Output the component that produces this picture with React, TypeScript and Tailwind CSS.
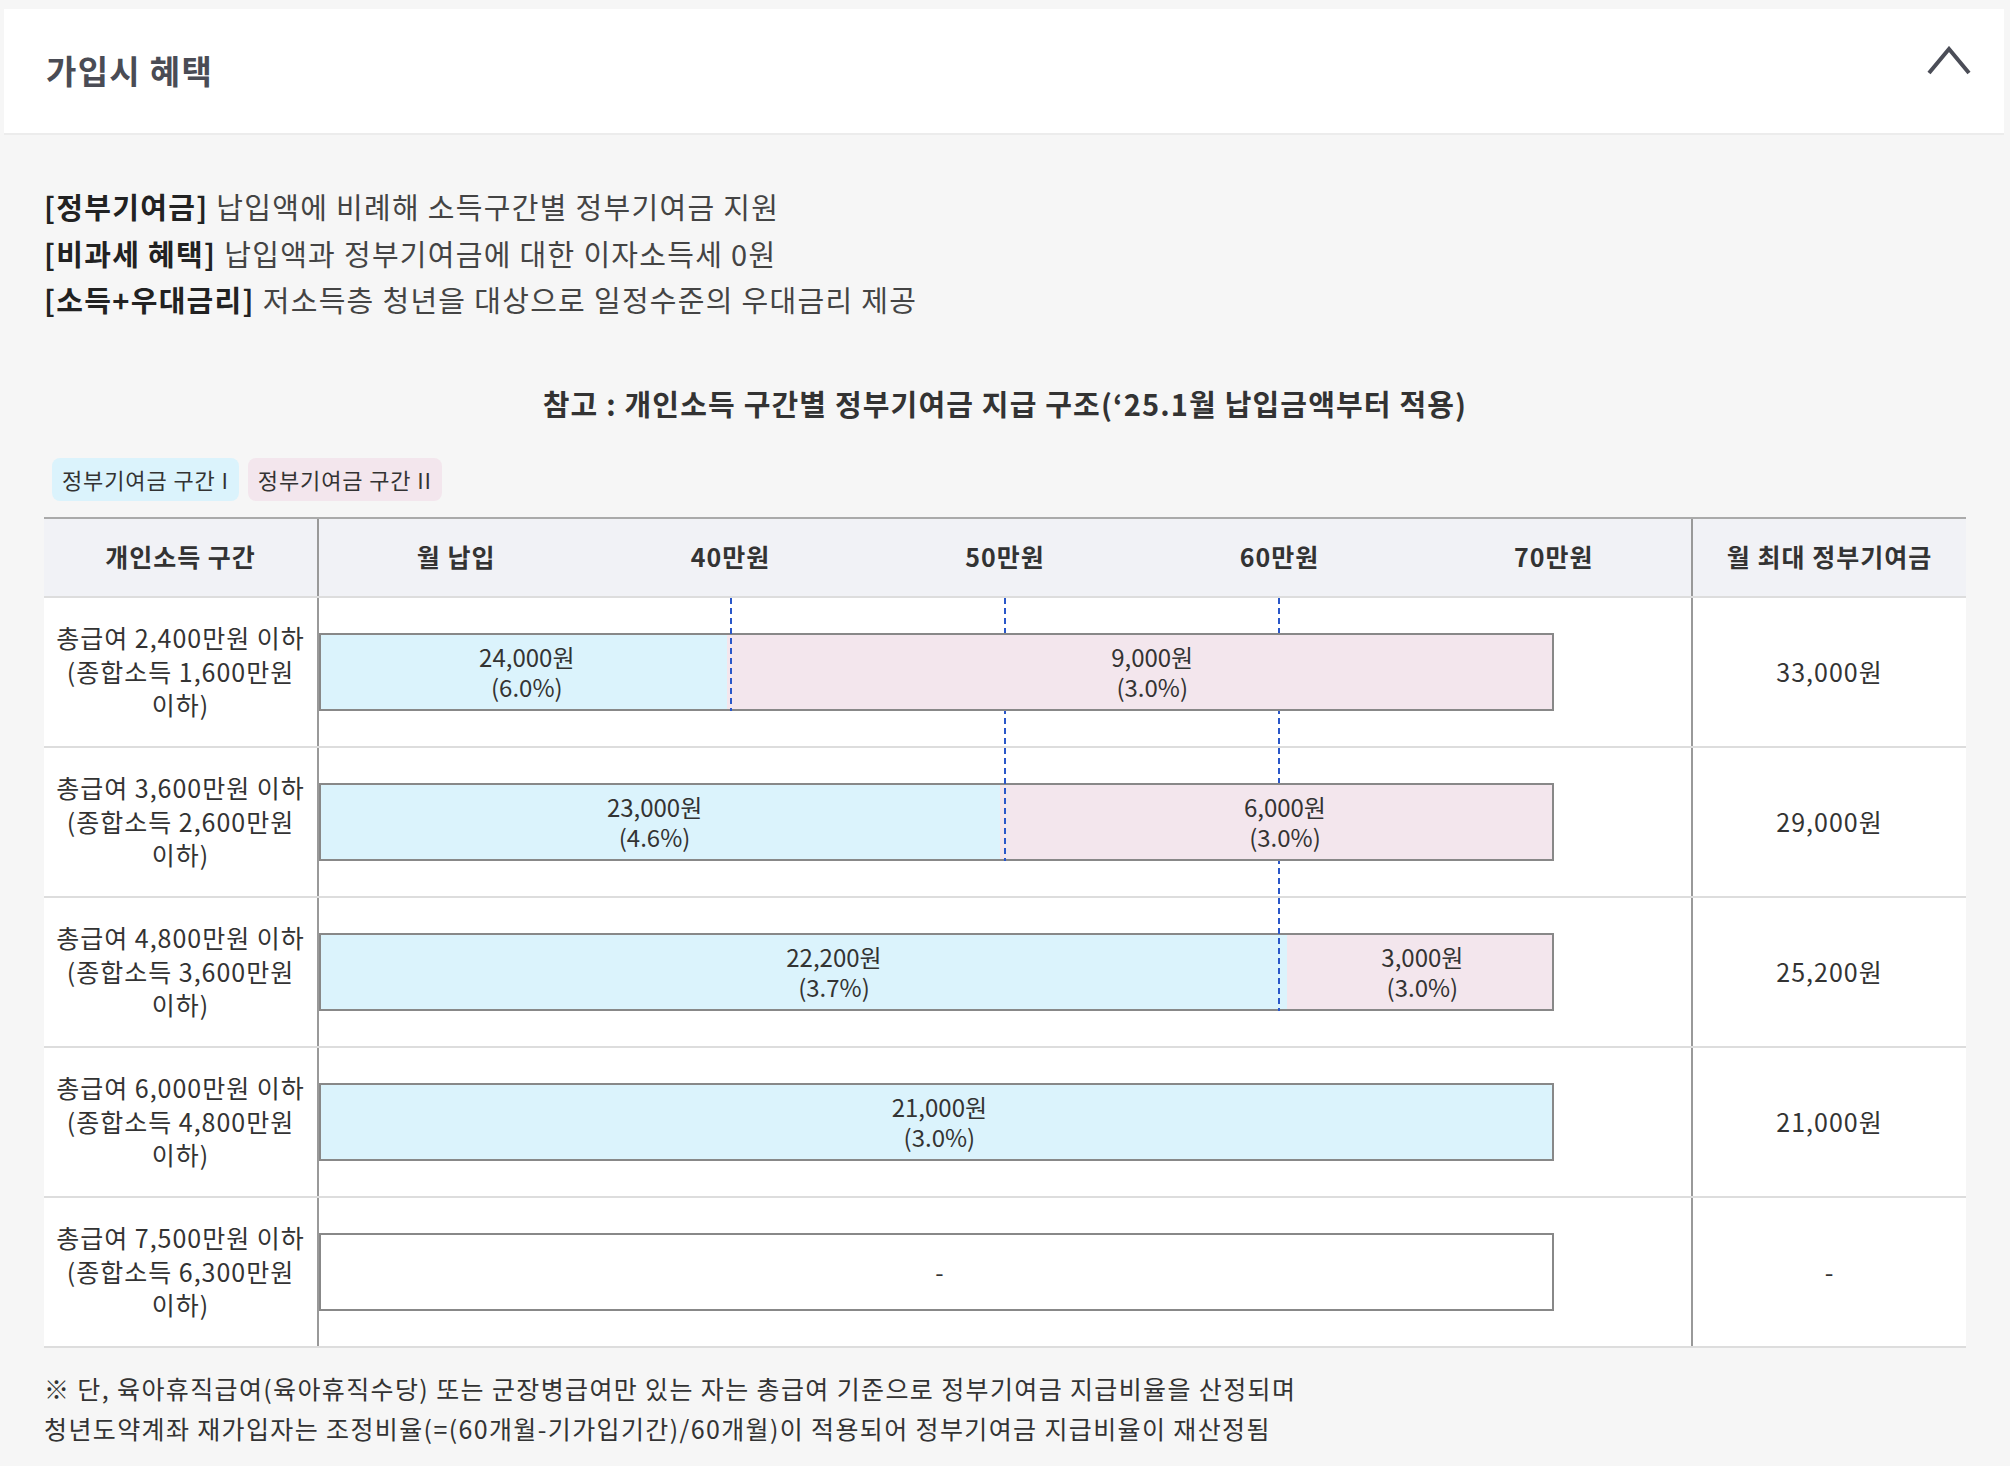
type Seg = { grow: number; tone: "blue" | "pink" | "none"; lines: string[]; cls?: string };
type Dash = { pos: number; short?: boolean };
type Row = { label: string[]; segs: Seg[]; dashes: Dash[]; max: string };

const rows: Row[] = [
  {
    label: ["총급여 2,400만원 이하", "(종합소득 1,600만원", "이하)"],
    segs: [
      { grow: 30, tone: "blue", lines: ["24,000원", "(6.0%)"], cls: "pl-[6px]" },
      { grow: 60, tone: "pink", lines: ["9,000원", "(3.0%)"], cls: "pl-[26px]" },
    ],
    dashes: [{ pos: 30, short: true }, { pos: 50 }, { pos: 70 }],
    max: "33,000원",
  },
  {
    label: ["총급여 3,600만원 이하", "(종합소득 2,600만원", "이하)"],
    segs: [
      { grow: 50, tone: "blue", lines: ["23,000원", "(4.6%)"], cls: "pr-[12px]" },
      { grow: 40, tone: "pink", lines: ["6,000원", "(3.0%)"], cls: "pl-[18px]" },
    ],
    dashes: [{ pos: 50, short: true }, { pos: 70 }],
    max: "29,000원",
  },
  {
    label: ["총급여 4,800만원 이하", "(종합소득 3,600만원", "이하)"],
    segs: [
      { grow: 70, tone: "blue", lines: ["22,200원", "(3.7%)"], cls: "pl-[60px]" },
      { grow: 20, tone: "pink", lines: ["3,000원", "(3.0%)"], cls: "pl-[6px]" },
    ],
    dashes: [{ pos: 70, short: true }],
    max: "25,200원",
  },
  {
    label: ["총급여 6,000만원 이하", "(종합소득 4,800만원", "이하)"],
    segs: [{ grow: 90, tone: "blue", lines: ["21,000원", "(3.0%)"], cls: "pl-[6px]" }],
    dashes: [],
    max: "21,000원",
  },
  {
    label: ["총급여 7,500만원 이하", "(종합소득 6,300만원", "이하)"],
    segs: [{ grow: 90, tone: "none", lines: ["-"], cls: "pl-[6px]" }],
    dashes: [],
    max: "-",
  },
];

const toneClass = {
  blue: "bg-[#dbf3fc]",
  pink: "bg-[#f3e6ed]",
  none: "bg-white",
};

function DashLine({ d }: { d: Dash }) {
  return (
    <div
      className={
        "absolute top-0 w-[2px] -ml-[1px] bg-[repeating-linear-gradient(to_bottom,#2a57c9_0_6px,transparent_6px_10px)] " +
        (d.short ? "h-[113px] z-20" : "h-full z-0")
      }
      style={{ left: `${d.pos}%` }}
    />
  );
}

function Chevron() {
  return (
    <svg width="46" height="30" viewBox="0 0 46 30" fill="none" className="-mt-[20px]">
      <polyline points="3,27 23,3 43,27" stroke="#4b4d57" strokeWidth="4" strokeLinejoin="miter" />
    </svg>
  );
}

export default function App() {
  return (
    <div className="w-[2010px] h-[1466px] bg-[#f6f6f6] pt-[9px] font-['Noto_Sans_CJK_KR',sans-serif] text-[#333]">
      <header className="mx-[4px] w-[2000px] h-[126px] bg-white border-b-2 border-[#ececec] flex items-center justify-between pl-[42px] pr-[32px]">
        <h2 className="text-[33px] tracking-[0.04em] font-semibold text-[#4a4c55]">가입시 혜택</h2>
        <Chevron />
      </header>

      <section className="px-[44px]">
        <div className="mt-[48px] text-[29px] tracking-[0.045em] leading-[46.5px] text-[#444]">
          <p><b className="font-bold text-[#222]">[정부기여금]</b> 납입액에 비례해 소득구간별 정부기여금 지원</p>
          <p><b className="font-bold text-[#222]">[비과세 혜택]</b> 납입액과 정부기여금에 대한 이자소득세 0원</p>
          <p><b className="font-bold text-[#222]">[소득+우대금리]</b> 저소득층 청년을 대상으로 일정수준의 우대금리 제공</p>
        </div>

        <h3 className="mt-[60px] text-center text-[29px] tracking-[0.04em] leading-[40px] font-bold text-[#333]">
          참고 : 개인소득 구간별 정부기여금 지급 구조(‘25.1월 납입금액부터 적용)
        </h3>

        <div className="mt-[35px] pl-[8px] flex gap-[9px] text-[22px] tracking-[0.04em] text-[#333]">
          <span className="h-[43px] px-[10px] rounded-[8px] bg-[#dbf3fc] flex items-center">정부기여금 구간 I</span>
          <span className="h-[43px] px-[10px] rounded-[8px] bg-[#f3e6ed] flex items-center">정부기여금 구간 II</span>
        </div>

        <div className="mt-[16px] w-[1922px] border-t-2 border-[#aaa] text-[25px] tracking-[0.04em] text-[#333]">
          <div className="grid grid-cols-[275px_1fr_275px] h-[79px] bg-[#f1f2f6] border-b-2 border-[#ddd] font-bold">
            <div className="flex items-center justify-center border-r-2 border-[#999]">개인소득 구간</div>
            <div className="grid grid-cols-5">
              {["월 납입", "40만원", "50만원", "60만원", "70만원"].map((t) => (
                <div key={t} className="flex items-center justify-center">{t}</div>
              ))}
            </div>
            <div className="flex items-center justify-center border-l-2 border-[#999]">월 최대 정부기여금</div>
          </div>

          {rows.map((r, i) => (
            <div key={i} className="grid grid-cols-[275px_1fr_275px] h-[150px] bg-white border-b-2 border-[#ddd]">
              <div className="flex flex-col items-center justify-center leading-[33.5px] border-r-2 border-[#999]">
                {r.label.map((l) => (
                  <span key={l}>{l}</span>
                ))}
              </div>
              <div className="relative flex items-center">
                {r.dashes.filter((d) => !d.short).map((d) => (
                  <DashLine key={d.pos} d={d} />
                ))}
                <div className="relative z-10 w-[90%] h-[78px] border-2 border-[#888] flex">
                  {r.segs.map((s, j) => (
                    <div
                      key={j}
                      className={"basis-0 flex flex-col items-center justify-center text-[24px] tracking-normal leading-[30px] " + toneClass[s.tone] + " " + (s.cls ?? "")}
                      style={{ flexGrow: s.grow }}
                    >
                      {s.lines.map((l) => (
                        <span key={l}>{l}</span>
                      ))}
                    </div>
                  ))}
                </div>
                {r.dashes.filter((d) => d.short).map((d) => (
                  <DashLine key={d.pos} d={d} />
                ))}
              </div>
              <div className="flex items-center justify-center border-l-2 border-[#999]">{r.max}</div>
            </div>
          ))}
        </div>

        <div className="mt-[20px] text-[25px] tracking-[0.055em] leading-[40px] text-[#333]">
          <p>※ 단, 육아휴직급여(육아휴직수당) 또는 군장병급여만 있는 자는 총급여 기준으로 정부기여금 지급비율을 산정되며</p>
          <p>청년도약계좌 재가입자는 조정비율(=(60개월-기가입기간)/60개월)이 적용되어 정부기여금 지급비율이 재산정됨</p>
        </div>
      </section>
    </div>
  );
}
